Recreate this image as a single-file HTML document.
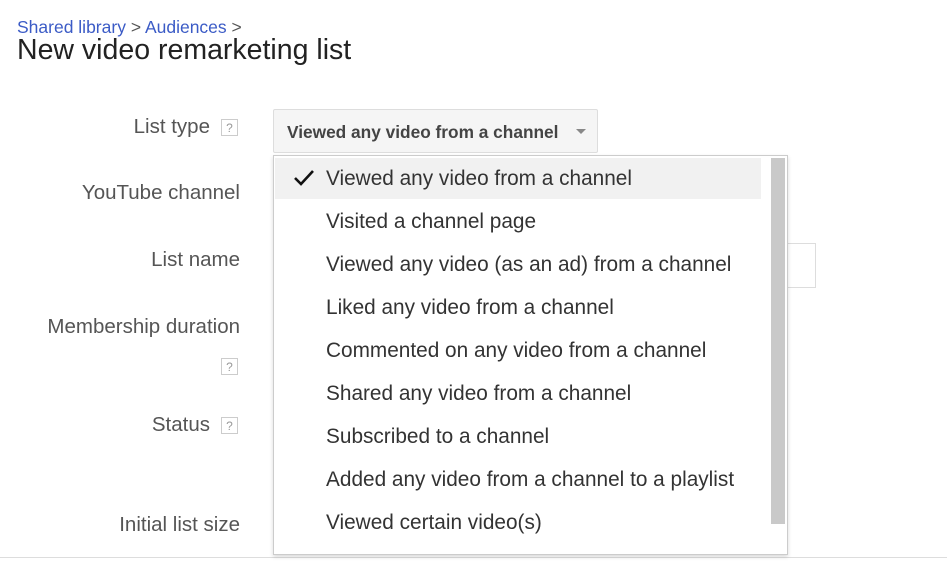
<!DOCTYPE html>
<html><head><meta charset="utf-8"><style>
body{margin:0;width:947px;height:563px;background:#fff;font-family:"Liberation Sans",Arial,sans-serif;position:relative;overflow:hidden}
.a{position:absolute;white-space:nowrap}
.bc{left:17px;top:17px;font-size:17.5px;color:#3b5bc6}
.bc span{color:#555}
.t{left:17px;top:34px;font-size:28.5px;color:#222}
.l{font-size:20.5px;color:#555;text-align:right;right:707px}
.q{position:absolute;width:17px;height:17px;border:1px solid #ccc;font-size:12px;color:#999;text-align:center;line-height:17px;box-sizing:border-box;background:#fff}
.btn{left:273px;top:109px;width:325px;height:44px;border:1px solid #ddd;border-radius:2px;background:#f5f5f5;box-sizing:border-box}
.btn b{position:absolute;left:13px;top:12px;font-size:17.3px;color:#444}
.arr{position:absolute;left:302px;top:19px;width:0;height:0;border-left:5px solid transparent;border-right:5px solid transparent;border-top:5px solid #888}
.dd{left:273px;top:155px;width:515px;height:400px;border:1px solid #ccc;box-sizing:border-box;background:#fff;box-shadow:0 2px 4px rgba(0,0,0,.15)}
.hl{position:absolute;left:1px;top:2px;width:486px;height:41px;background:#f1f1f1}
.sb{position:absolute;left:497px;top:2px;width:14px;height:366px;background:#c9c9c9}
.it{position:absolute;left:52px;font-size:20.8px;color:#333}
.inp{left:787px;top:243px;width:29px;height:45px;border:1px solid #ddd;border-left:none;box-sizing:border-box}
.line{left:0;top:557px;width:947px;height:1px;background:#ddd}
</style></head><body>
<div class="a bc">Shared library <span>&gt;</span> Audiences <span>&gt;</span></div>
<div class="a t">New video remarketing list</div>

<div class="a l" style="top:115px;right:737px">List type</div>
<div class="q" style="left:221px;top:119px">?</div>
<div class="a l" style="top:181px">YouTube channel</div>
<div class="a l" style="top:248px">List name</div>
<div class="a l" style="top:315px">Membership duration</div>
<div class="q" style="left:221px;top:358px">?</div>
<div class="a l" style="top:413px;right:737px">Status</div>
<div class="q" style="left:221px;top:417px">?</div>
<div class="a l" style="top:513px">Initial list size</div>

<div class="a inp"></div>
<div class="a line"></div>

<div class="a btn"><b>Viewed any video from a channel</b><div class="arr"></div></div>

<div class="a dd">
<div class="hl"></div>
<div class="sb"></div>
<svg style="position:absolute;left:19px;top:13px" width="22" height="18" viewBox="0 0 22 18"><path d="M2 9 L8 15 L20 2" fill="none" stroke="#111" stroke-width="2.6"/></svg>
<div class="it" style="top:11px">Viewed any video from a channel</div>
<div class="it" style="top:54px">Visited a channel page</div>
<div class="it" style="top:97px">Viewed any video (as an ad) from a channel</div>
<div class="it" style="top:140px">Liked any video from a channel</div>
<div class="it" style="top:183px">Commented on any video from a channel</div>
<div class="it" style="top:226px">Shared any video from a channel</div>
<div class="it" style="top:269px">Subscribed to a channel</div>
<div class="it" style="top:312px">Added any video from a channel to a playlist</div>
<div class="it" style="top:355px">Viewed certain video(s)</div>
</div>
</body></html>
